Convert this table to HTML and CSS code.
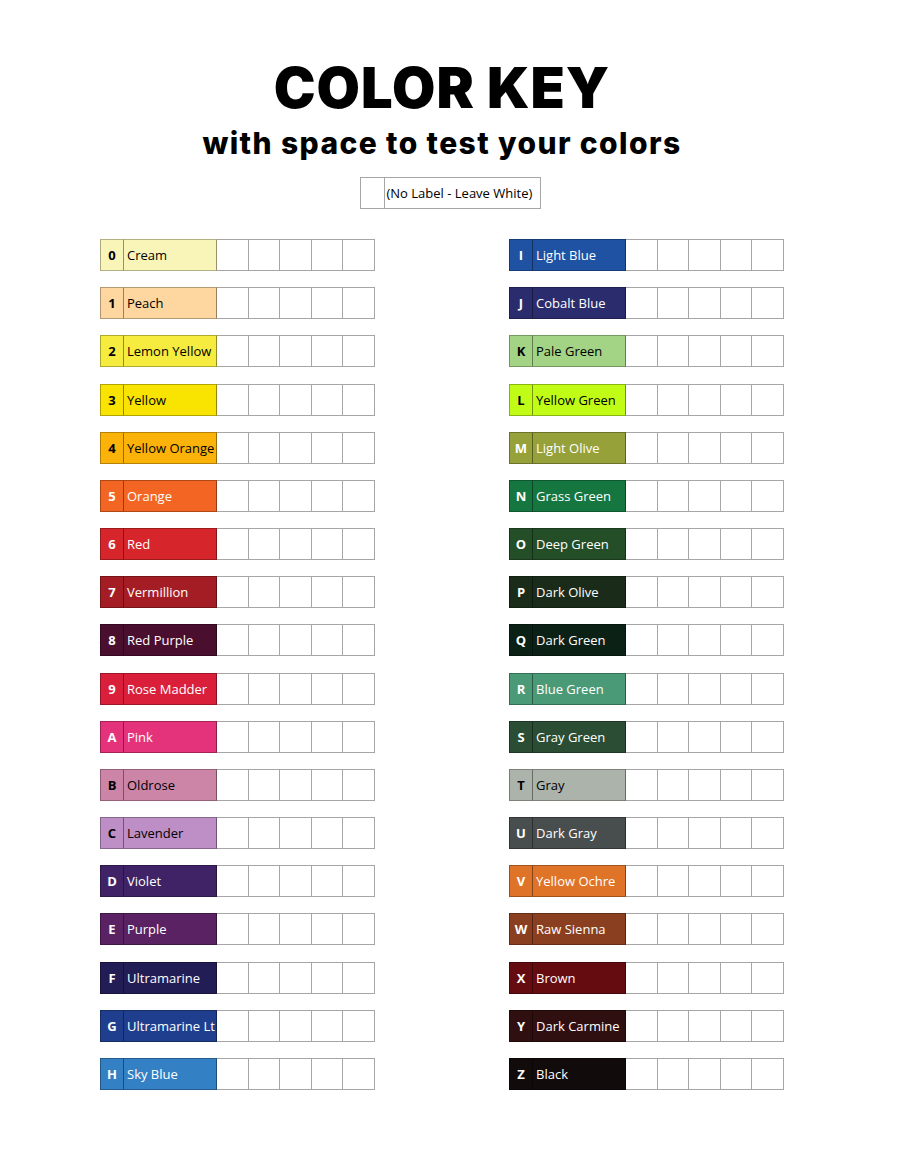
FILE: index.html
```html
<!DOCTYPE html>
<html lang="en">
<head>
<meta charset="utf-8">
<title>Color Key</title>
<link rel="stylesheet" href="styles.css">
</head>
<body>
<main class="page">
  <header class="head">
    <h1 class="title">COLOR KEY</h1>
    <p class="subtitle">with space to test your colors</p>
    <div class="legend"><span class="legend-swatch"></span><span class="legend-text">(No Label - Leave White)</span></div>
  </header>
  <section class="keys">
    <div class="col">
      <div class="row"><span class="code k0">0</span><span class="name k0">Cream</span><span class="t"></span><span class="t"></span><span class="t"></span><span class="t"></span><span class="t"></span></div>
      <div class="row"><span class="code k1">1</span><span class="name k1">Peach</span><span class="t"></span><span class="t"></span><span class="t"></span><span class="t"></span><span class="t"></span></div>
      <div class="row"><span class="code k2">2</span><span class="name k2">Lemon Yellow</span><span class="t"></span><span class="t"></span><span class="t"></span><span class="t"></span><span class="t"></span></div>
      <div class="row"><span class="code k3">3</span><span class="name k3">Yellow</span><span class="t"></span><span class="t"></span><span class="t"></span><span class="t"></span><span class="t"></span></div>
      <div class="row"><span class="code k4">4</span><span class="name k4">Yellow Orange</span><span class="t"></span><span class="t"></span><span class="t"></span><span class="t"></span><span class="t"></span></div>
      <div class="row"><span class="code k5">5</span><span class="name k5">Orange</span><span class="t"></span><span class="t"></span><span class="t"></span><span class="t"></span><span class="t"></span></div>
      <div class="row"><span class="code k6">6</span><span class="name k6">Red</span><span class="t"></span><span class="t"></span><span class="t"></span><span class="t"></span><span class="t"></span></div>
      <div class="row"><span class="code k7">7</span><span class="name k7">Vermillion</span><span class="t"></span><span class="t"></span><span class="t"></span><span class="t"></span><span class="t"></span></div>
      <div class="row"><span class="code k8">8</span><span class="name k8">Red Purple</span><span class="t"></span><span class="t"></span><span class="t"></span><span class="t"></span><span class="t"></span></div>
      <div class="row"><span class="code k9">9</span><span class="name k9">Rose Madder</span><span class="t"></span><span class="t"></span><span class="t"></span><span class="t"></span><span class="t"></span></div>
      <div class="row"><span class="code kA">A</span><span class="name kA">Pink</span><span class="t"></span><span class="t"></span><span class="t"></span><span class="t"></span><span class="t"></span></div>
      <div class="row"><span class="code kB">B</span><span class="name kB">Oldrose</span><span class="t"></span><span class="t"></span><span class="t"></span><span class="t"></span><span class="t"></span></div>
      <div class="row"><span class="code kC">C</span><span class="name kC">Lavender</span><span class="t"></span><span class="t"></span><span class="t"></span><span class="t"></span><span class="t"></span></div>
      <div class="row"><span class="code kD">D</span><span class="name kD">Violet</span><span class="t"></span><span class="t"></span><span class="t"></span><span class="t"></span><span class="t"></span></div>
      <div class="row"><span class="code kE">E</span><span class="name kE">Purple</span><span class="t"></span><span class="t"></span><span class="t"></span><span class="t"></span><span class="t"></span></div>
      <div class="row"><span class="code kF">F</span><span class="name kF">Ultramarine</span><span class="t"></span><span class="t"></span><span class="t"></span><span class="t"></span><span class="t"></span></div>
      <div class="row"><span class="code kG">G</span><span class="name kG">Ultramarine Lt</span><span class="t"></span><span class="t"></span><span class="t"></span><span class="t"></span><span class="t"></span></div>
      <div class="row"><span class="code kH">H</span><span class="name kH">Sky Blue</span><span class="t"></span><span class="t"></span><span class="t"></span><span class="t"></span><span class="t"></span></div>
    </div>
    <div class="col">
      <div class="row"><span class="code kI">I</span><span class="name kI">Light Blue</span><span class="t"></span><span class="t"></span><span class="t"></span><span class="t"></span><span class="t"></span></div>
      <div class="row"><span class="code kJ">J</span><span class="name kJ">Cobalt Blue</span><span class="t"></span><span class="t"></span><span class="t"></span><span class="t"></span><span class="t"></span></div>
      <div class="row"><span class="code kK">K</span><span class="name kK">Pale Green</span><span class="t"></span><span class="t"></span><span class="t"></span><span class="t"></span><span class="t"></span></div>
      <div class="row"><span class="code kL">L</span><span class="name kL">Yellow Green</span><span class="t"></span><span class="t"></span><span class="t"></span><span class="t"></span><span class="t"></span></div>
      <div class="row"><span class="code kM">M</span><span class="name kM">Light Olive</span><span class="t"></span><span class="t"></span><span class="t"></span><span class="t"></span><span class="t"></span></div>
      <div class="row"><span class="code kN">N</span><span class="name kN">Grass Green</span><span class="t"></span><span class="t"></span><span class="t"></span><span class="t"></span><span class="t"></span></div>
      <div class="row"><span class="code kO">O</span><span class="name kO">Deep Green</span><span class="t"></span><span class="t"></span><span class="t"></span><span class="t"></span><span class="t"></span></div>
      <div class="row"><span class="code kP">P</span><span class="name kP">Dark Olive</span><span class="t"></span><span class="t"></span><span class="t"></span><span class="t"></span><span class="t"></span></div>
      <div class="row"><span class="code kQ">Q</span><span class="name kQ">Dark Green</span><span class="t"></span><span class="t"></span><span class="t"></span><span class="t"></span><span class="t"></span></div>
      <div class="row"><span class="code kR">R</span><span class="name kR">Blue Green</span><span class="t"></span><span class="t"></span><span class="t"></span><span class="t"></span><span class="t"></span></div>
      <div class="row"><span class="code kS">S</span><span class="name kS">Gray Green</span><span class="t"></span><span class="t"></span><span class="t"></span><span class="t"></span><span class="t"></span></div>
      <div class="row"><span class="code kT">T</span><span class="name kT">Gray</span><span class="t"></span><span class="t"></span><span class="t"></span><span class="t"></span><span class="t"></span></div>
      <div class="row"><span class="code kU">U</span><span class="name kU">Dark Gray</span><span class="t"></span><span class="t"></span><span class="t"></span><span class="t"></span><span class="t"></span></div>
      <div class="row"><span class="code kV">V</span><span class="name kV">Yellow Ochre</span><span class="t"></span><span class="t"></span><span class="t"></span><span class="t"></span><span class="t"></span></div>
      <div class="row"><span class="code kW">W</span><span class="name kW">Raw Sienna</span><span class="t"></span><span class="t"></span><span class="t"></span><span class="t"></span><span class="t"></span></div>
      <div class="row"><span class="code kX">X</span><span class="name kX">Brown</span><span class="t"></span><span class="t"></span><span class="t"></span><span class="t"></span><span class="t"></span></div>
      <div class="row"><span class="code kY">Y</span><span class="name kY">Dark Carmine</span><span class="t"></span><span class="t"></span><span class="t"></span><span class="t"></span><span class="t"></span></div>
      <div class="row"><span class="code kZ">Z</span><span class="name kZ">Black</span><span class="t"></span><span class="t"></span><span class="t"></span><span class="t"></span><span class="t"></span></div>
    </div>
  </section>
</main>
</body>
</html>
```

FILE: styles.css
```css
* { box-sizing: border-box; }
html, body { margin: 0; padding: 0; background: #fff; }
body { font-family: "Open Sans", "Noto Sans", sans-serif; color: #000; }

.page { width: 900px; height: 1165px; }

.head { display: flex; flex-direction: column; align-items: center; padding-top: 56px; }
.title {
  margin: 0 16px 0 0;
  font-family: Inter, "DejaVu Sans", sans-serif;
  font-weight: 900;
  font-size: 56px;
  line-height: 64px;
  letter-spacing: 1px;
}
.subtitle {
  margin: 3px 16px 0 0;
  font-family: Inter, "DejaVu Sans", sans-serif;
  font-weight: 800;
  font-size: 30px;
  line-height: 40px;
  letter-spacing: 1.4px;
}
.legend {
  margin-top: 14px;
  display: flex;
  height: 32px;
  width: 181px;
  border: 1px solid #a6a6a6;
}
.legend-swatch { width: 24px; border-right: 1px solid #a6a6a6; }
.legend-text { display: flex; align-items: center; padding-left: 2px; font-size: 13px; }

.keys {
  display: grid;
  grid-template-columns: 275px 275px;
  column-gap: 134px;
  padding-left: 100px;
  margin-top: 30px;
}
.col { display: flex; flex-direction: column; gap: 16.18px; }
.row { display: flex; height: 32px; }
.row > span {
  display: flex;
  align-items: center;
  border-top: 1px solid #a6a6a6;
  border-bottom: 1px solid #a6a6a6;
  border-right: 1px solid #a6a6a6;
  font-size: 13px;
}
.code {
  width: 24px;
  justify-content: center;
  font-weight: 700;
  color: #fff;
  border-left: 1px solid rgba(0,0,0,0.3) !important;
}
.row > .code, .row > .name {
  border-top-color: rgba(0,0,0,0.28);
  border-bottom-color: rgba(0,0,0,0.28);
  border-right-color: rgba(0,0,0,0.4);
}
.name { width: 93px; padding-left: 3px; color: #fff; white-space: nowrap; }
.t { width: 31.6px; }

.k0 { background: #f9f5b8; color: #000; }
.k1 { background: #fdd6a0; color: #000; }
.k2 { background: #f6ec40; color: #000; }
.k3 { background: #f9e300; color: #000; }
.k4 { background: #fbb30a; color: #000; }
.k5 { background: #f26522; }
.k6 { background: #d7262b; }
.k7 { background: #a51d24; }
.k8 { background: #4a0f2e; }
.k9 { background: #d91f3a; }
.kA { background: #e4337a; }
.kB { background: #cc85a6; color: #000; }
.kC { background: #bd8fc6; color: #000; }
.kD { background: #3f2366; }
.kE { background: #5a2163; }
.kF { background: #221d55; }
.kG { background: #1f3f8e; }
.kH { background: #3380c4; }
.kI { background: #1f52a3; }
.kJ { background: #2a2c6e; }
.kK { background: #a3d385; color: #000; }
.kL { background: #c1fc17; color: #000; }
.kM { background: #97a13a; }
.kN { background: #157640; }
.kO { background: #244e28; }
.kP { background: #1b2b19; }
.kQ { background: #0b2115; }
.kR { background: #4a9a78; }
.kS { background: #2a4d33; }
.kT { background: #acb3aa; color: #000; }
.kU { background: #484d4e; }
.kV { background: #df7327; }
.kW { background: #8a4020; }
.kX { background: #650c10; }
.kY { background: #2f0f0f; }
.kZ { background: #120b0b; }
```
